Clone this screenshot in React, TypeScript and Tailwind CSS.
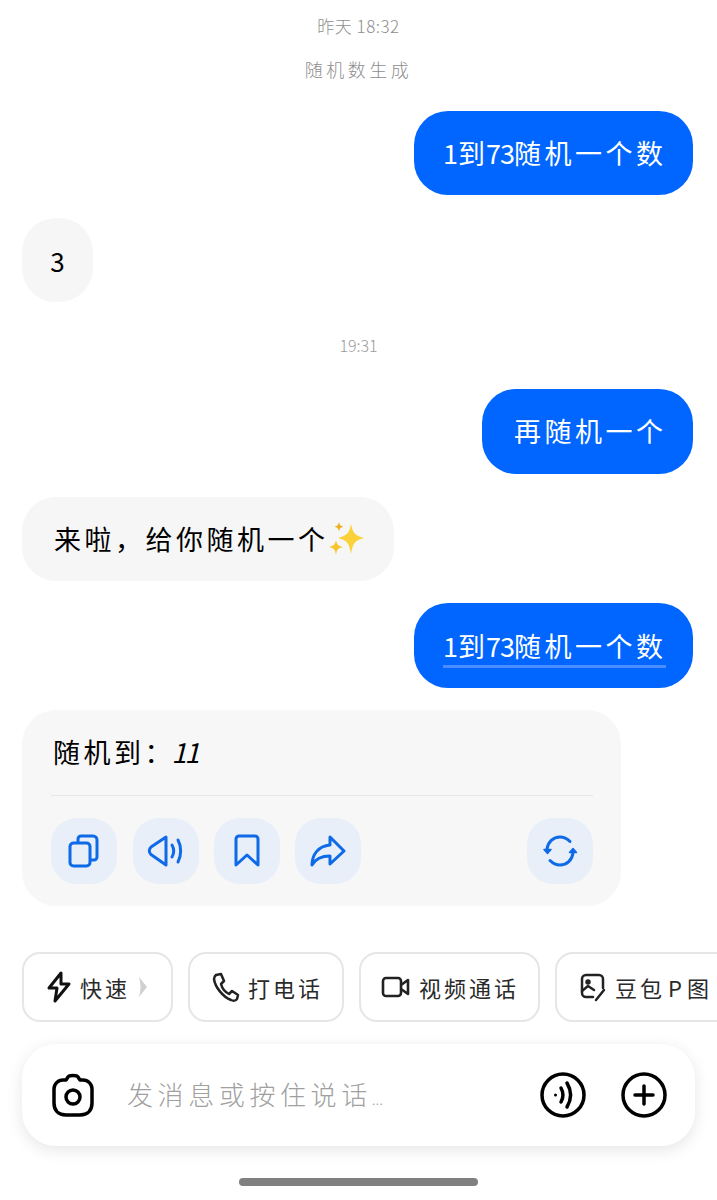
import React from "react";

function Action({ children, className = "" }: { children: React.ReactNode; className?: string }) {
  return (
    <div className={`w-[66px] h-[66px] rounded-[26px] bg-[#e8eff9] flex items-center justify-center text-[#0f6ae8] ${className}`}>
      {children}
    </div>
  );
}

function Chip({ icon, label, className = "", children }: { icon: React.ReactNode; label: React.ReactNode; className?: string; children?: React.ReactNode }) {
  return (
    <div className={`h-[70px] shrink-0 rounded-[18px] border-2 border-[#e6e6e6] bg-white flex items-center text-[22px] tracking-[3px] text-[#2a2a2a] ${className}`}>
      {icon}
      <span className="ml-[8px] whitespace-nowrap">{label}</span>
      {children}
    </div>
  );
}

function NumberPrompt() {
  return (
    <>
      <span>1</span>
      <span className="tracking-[1px]">到</span>
      <span className="tracking-[-1px]">73</span>
      <span className="tracking-[3.500px]">随机一个数</span>
    </>
  );
}

export default function App() {
  return (
    <div className="w-[717px] h-[1200px] overflow-hidden bg-white flex flex-col font-['Noto_Sans_CJK_SC','Noto_Sans',sans-serif]">
      <div className="mt-[14px] h-[24px] leading-[24px] text-center text-[17px] text-[#8e8e8e] font-light tracking-[0.500px]">昨天 18:32</div>
      <div className="mt-[18px] h-[26px] leading-[26px] text-center text-[18px] text-[#8e8e8e] font-light tracking-[3.500px]">随机数生成</div>

      <div className="mt-[29px] mr-[24px] self-end w-[279px] h-[84px] rounded-[34px] bg-[#0066ff] text-white text-[27px] flex items-center pl-[29px] whitespace-nowrap">
        <NumberPrompt />
      </div>

      <div className="mt-[23px] ml-[22px] self-start w-[71px] h-[84px] rounded-[34px] bg-[#f6f6f6] text-black text-[26px] flex items-center justify-center">3</div>

      <div className="mt-[33px] h-[20px] leading-[20px] text-center text-[16px] text-[#9a9a9a] font-light">19:31</div>

      <div className="mt-[34px] mr-[24px] self-end w-[211px] h-[85px] rounded-[34px] bg-[#0066ff] text-white text-[27px] tracking-[3.500px] flex items-center pl-[32px] whitespace-nowrap">再随机一个</div>

      <div className="mt-[23px] ml-[22px] self-start w-[372px] h-[84px] rounded-[34px] bg-[#f6f6f6] text-black text-[27px] tracking-[3.500px] flex items-center pl-[32px] whitespace-nowrap">
        <span>来啦，给你随机一个</span>
        <svg width="38" height="38" viewBox="0 0 38 38" className="-ml-[2px]">
          <path d="M24 4c1.800 9 3.800 11.500 13 14-9.200 2.500-11.200 5-13 16-1.800-11-3.800-13.500-13-16 9.200-2.500 11.200-5 13-14z" fill="#fbd13a" />
          <path d="M9 20c.9 4.500 2 5.800 7 7-5 1.200-6.100 2.500-7 8-.9-5.500-2-6.800-7-8 5-1.200 6.100-2.500 7-7z" fill="#f8c52c" />
          <path d="M12 2c.6 3 1.400 3.800 4.500 4.700-3.100.9-3.900 1.700-4.500 4.800-.6-3.100-1.400-3.900-4.500-4.800C10.600 5.800 11.400 5 12 2z" fill="#eeb021" />
        </svg>
      </div>

      <div className="mt-[22px] mr-[24px] self-end w-[279px] h-[85px] rounded-[34px] bg-[#0066ff] text-white text-[27px] flex items-center pl-[29px] whitespace-nowrap">
        <span className="flex border-b-[3px] border-[#4a8dff] h-[40px] leading-[36px] mt-[4px]">
          <NumberPrompt />
        </span>
      </div>

      <div className="mt-[22px] ml-[22px] self-start w-[599px] h-[196px] rounded-[34px] bg-[#f7f7f8] pt-[23px] px-[29px] flex flex-col">
        <div className="h-[38px] mb-[1px] leading-[38px] pl-[2px] text-[27px] tracking-[3.500px] text-black whitespace-nowrap">随机到<span className="tracking-[0px]">：</span><span className="italic tracking-[-2px]">11</span></div>
        <div className="mt-[23px] h-[1px] bg-[#e6e6e6] w-[542px]" />
        <div className="mt-[22px] flex w-[542px]">
          <Action>
            <svg width="34" height="34" viewBox="0 0 34 34" fill="none" stroke="currentColor" strokeWidth="3" strokeLinejoin="round">
              <rect x="3" y="9" width="20" height="23" rx="3.500" />
              <path d="M11 9V5a3 3 0 0 1 3-3h12a4 4 0 0 1 4 4v17a3 3 0 0 1-3 3h-4" />
            </svg>
          </Action>
          <Action className="ml-[16px]">
            <svg width="38" height="34" viewBox="0 0 38 34" fill="none" stroke="currentColor" strokeWidth="3" strokeLinecap="round" strokeLinejoin="round">
              <path d="M18 3v28L3 20.500a5 5 0 0 1 0-7.500z" transform="translate(1 0)" />
              <path d="M25 11c2 3.500 2 8.500 0 12" />
              <path d="M31 6c3.500 6.500 3.500 15.500 0 22" />
            </svg>
          </Action>
          <Action className="ml-[15px]">
            <svg width="30" height="34" viewBox="0 0 30 34" fill="none" stroke="currentColor" strokeWidth="3" strokeLinejoin="round">
              <path d="M4 5a3 3 0 0 1 3-3h16a3 3 0 0 1 3 3v26l-11-10L4 31z" />
            </svg>
          </Action>
          <Action className="ml-[15px]">
            <svg width="36" height="32" viewBox="0 0 36 32" fill="none" stroke="currentColor" strokeWidth="3" strokeLinecap="round" strokeLinejoin="round">
              <path d="M20 2l14 14-14 13v-8C12 21 6 23 2 30c0-10 6-19 18-20z" />
            </svg>
          </Action>
          <Action className="ml-auto">
            <svg width="36" height="34" viewBox="0 0 36 34" fill="none" stroke="currentColor" strokeWidth="3" strokeLinecap="round">
              <path d="M5 15C6 8 11 3 18 3c4 0 7 1.500 10 4.500" />
              <path d="M31 19c-1 7-6 12-13 12-4 0-7-1.500-10-4.500" />
              <path d="M2 15.500l3.500 4 3.500-4z" fill="currentColor" strokeWidth="1.500" strokeLinejoin="round" />
              <path d="M27.500 18.500l3.500-4 3.500 4z" fill="currentColor" strokeWidth="1.500" strokeLinejoin="round" />
            </svg>
          </Action>
        </div>
      </div>

      <div className="mt-[46px] ml-[22px] flex gap-[15px]">
        <Chip className="w-[151px] pl-[22px]" icon={
          <svg width="26" height="32" viewBox="0 0 26 32" fill="none" stroke="#111" strokeWidth="3" strokeLinejoin="round"><path d="M15 2L3 17h8l-2 13 14-17h-8z" /></svg>
        } label="快速">
          <svg width="12" height="22" viewBox="0 0 12 22" className="ml-[7px]"><path d="M2 1l8 10-8 10c2-7 2-13 0-20z" fill="#d0d0d0" /></svg>
        </Chip>
        <Chip className="w-[156px] pl-[22px]" icon={
          <svg width="28" height="30" viewBox="0 0 28 30" fill="none" stroke="#222" strokeWidth="2.500" strokeLinejoin="round"><path d="M4 3l5-1 3 7-3 3c1 4 4 8 8 10l3-3 6 4-1 4c-1 2-4 2-6 1C11 25 3 15 2 7c0-2 1-3 2-4z" /></svg>
        } label="打电话" />
        <Chip className="w-[181px] pl-[20px]" icon={
          <svg width="30" height="24" viewBox="0 0 30 24" fill="none" stroke="#222" strokeWidth="2.600" strokeLinejoin="round"><rect x="2" y="3" width="18" height="18" rx="3" /><path d="M20 10l7-5v14l-7-5" /></svg>
        } label="视频通话" />
        <Chip className="w-[200px] pl-[22px]" icon={
          <svg width="28" height="30" viewBox="0 0 28 30" fill="none" stroke="#222" strokeWidth="2.500" strokeLinecap="round" strokeLinejoin="round"><path d="M14 25H7a4 4 0 0 1-4-4V7a4 4 0 0 1 4-4h13a4 4 0 0 1 4 4v9" /><circle cx="9" cy="10" r="1.500" fill="#222" /><path d="M3 19l6-5 6 4" /><path d="M25 18l-8 10" /></svg>
        } label={<>豆包<span className="ml-[3px] mr-[2px]">P</span>图</>} />
      </div>

      <div className="mt-[22px] ml-[22px] w-[673px] h-[102px] shrink-0 rounded-[34px] bg-white shadow-[0_4px_16px_rgba(0,0,0,0.1)] flex items-center pl-[29px] pr-[28px]">
        <svg width="44" height="46" viewBox="0 0 44 46" fill="none" stroke="#000" strokeWidth="3.500" strokeLinejoin="round">
          <path d="M15 8l2-3c1-2 9-2 10 0l2 3h3a9 9 0 0 1 9 9v14c0 7-4 12-12 12H15C7 43 3 38 3 31V17a9 9 0 0 1 9-9z" />
          <circle cx="22" cy="25" r="7" />
        </svg>
        <span className="ml-[32px] -mt-[4px] text-[26px] tracking-[4.600px] text-[#a0a0a0] font-light whitespace-nowrap">发消息或按住说话<span className="text-[15px] tracking-[0px]">...</span></span>
        <svg className="ml-auto" width="46" height="46" viewBox="0 0 46 46" fill="none" stroke="#000" strokeWidth="3.500" strokeLinecap="round">
          <circle cx="23" cy="23" r="21" />
          <circle cx="15.500" cy="23" r="1.500" fill="#000" stroke="none" />
          <path d="M21 16c2.500 4.500 2.500 9.500 0 14" />
          <path d="M27 11c4.500 7.500 4.500 16.500 0 24" />
        </svg>
        <svg className="ml-[35px]" width="46" height="46" viewBox="0 0 46 46" fill="none" stroke="#000" strokeWidth="3.500" strokeLinecap="round">
          <circle cx="23" cy="23" r="21" />
          <path d="M23 14v18M14 23h18" />
        </svg>
      </div>

      <div className="mt-[32px] self-center w-[239px] h-[8px] rounded-full bg-[#808080]" />
    </div>
  );
}
